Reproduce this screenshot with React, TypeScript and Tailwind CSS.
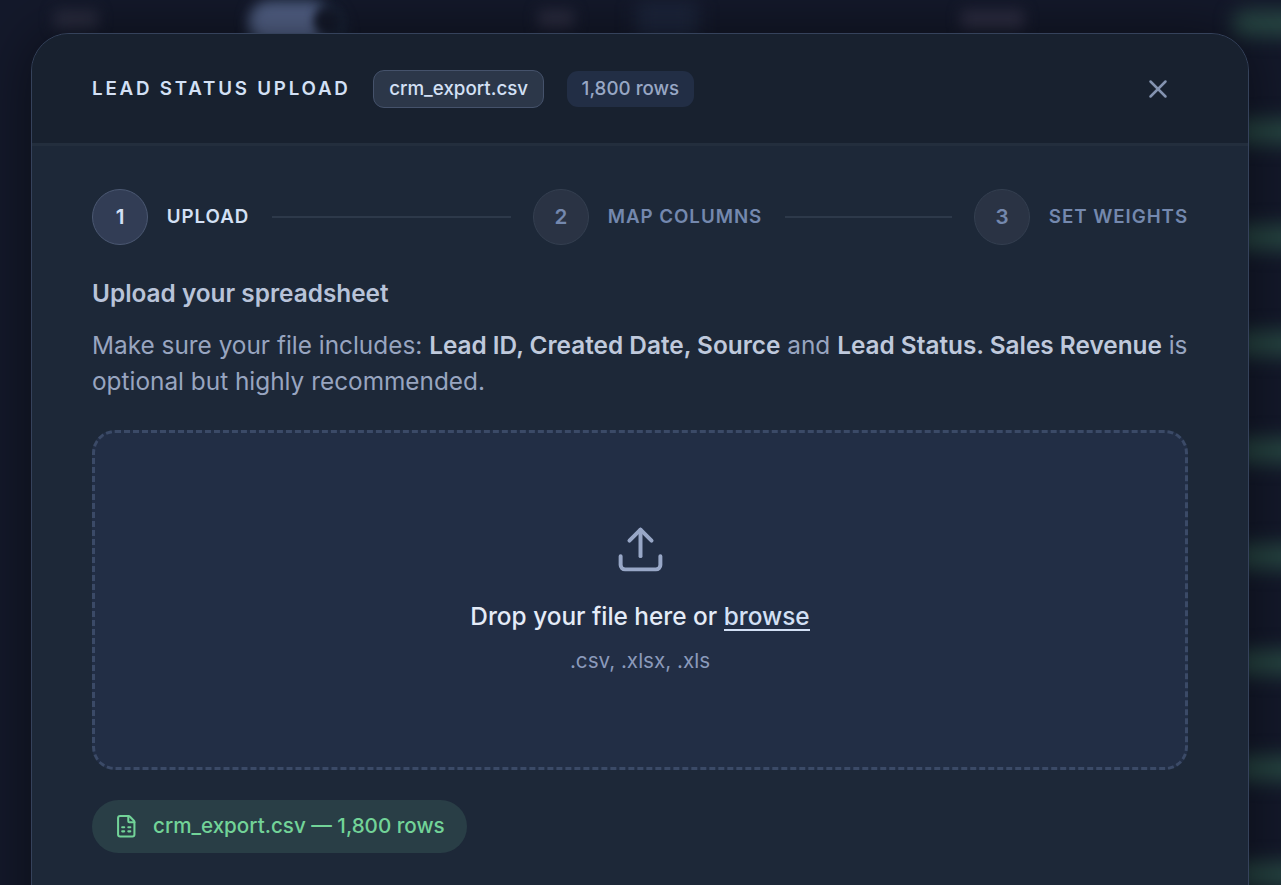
import { FileSpreadsheet, Upload, X } from "lucide-react";

type Step = {
  id: number;
  label: string;
};

const steps: Step[] = [
  { id: 1, label: "Upload" },
  { id: 2, label: "Map columns" },
  { id: 3, label: "Set weights" },
];

const FILE_NAME = "crm_export.csv";
const ROW_COUNT = "1,800 rows";
const CURRENT_STEP = 1;

// top offsets of the green status pills behind the modal
const pillRows = [24, 132, 238, 344, 451, 557, 663, 769, 875];

function Backdrop() {
  return (
    <div className="absolute inset-0 overflow-hidden bg-[#14192b]">
      <div className="absolute left-[54px] top-[10px] h-[19px] w-[44px] rounded bg-[#2a2c3f] blur-[7px]" />
      <div className="absolute left-[249px] top-0 h-[60px] w-[98px] rounded-full bg-[#1a2539] blur-[6px]" />
      <div className="absolute left-[249px] top-[2px] h-[40px] w-[72px] rounded-l-full bg-[#546389] blur-[7px]" />
      <div className="absolute left-[314px] top-[8px] h-[26px] w-[26px] rounded-full bg-[#151a2b] blur-[5px]" />
      <div className="absolute left-[538px] top-[10px] h-[18px] w-[36px] rounded bg-[#2c2d41] blur-[7px]" />
      <div className="absolute left-[636px] top-[2px] h-[40px] w-[62px] rounded bg-[#1d263d] blur-[9px]" />
      <div className="absolute left-[961px] top-[10px] h-[19px] w-[63px] rounded bg-[#2e2e43] blur-[7px]" />
      {pillRows.map((y) => (
        <div
          key={y}
          className="absolute left-[1232px] h-[27px] w-[80px] rounded-full bg-[#264341] blur-[9px]"
          style={{ top: y - 14 }}
        />
      ))}
    </div>
  );
}

function StepIndicator({ current }: { current: number }) {
  return (
    <div className="flex items-center">
      {steps.map((step, index) => {
        const active = step.id === current;
        const last = index === steps.length - 1;
        return (
          <div key={step.id} className={`flex items-center ${last ? "" : "flex-1"}`}>
            <span
              className={`flex size-14 items-center justify-center rounded-full border text-[20.625px] font-semibold ${
                active
                  ? "border-[#4b5872] bg-[#323d55] text-[#d3e0f5]"
                  : "border-[#343f50] bg-[#2a3344] text-[#7488ae]"
              }`}
            >
              {step.id}
            </span>
            <span
              className={`ml-[18.75px] text-[18.75px] font-semibold uppercase tracking-[0.05em] ${
                active ? "text-[#d3e0f5]" : "text-[#7488ae]"
              }`}
            >
              {step.label}
            </span>
            {!last && <div className="mx-[22.5px] h-0.5 flex-1 bg-[#2d394a]" />}
          </div>
        );
      })}
    </div>
  );
}

function Dropzone() {
  return (
    <div className="mt-[30px] flex h-[340px] flex-col items-center rounded-[23px] border-3 border-dashed border-[#3b4a67] bg-[#222e45] pt-[89.5px]">
      <Upload className="size-[53px] text-[#98a7c7]" strokeWidth={1.8} />
      <p className="mt-[21.5px] text-[24.375px] leading-[38px] font-medium text-[#e4ebf7]">
        Drop your file here or{" "}
        <button className="border-b-2 border-[#d3e0f5] leading-[26px] text-[#d3e0f5]">browse</button>
      </p>
      <p className="mt-[11px] text-[20.625px] leading-[30px] text-[#8b9abb]">.csv, .xlsx, .xls</p>
    </div>
  );
}

export default function App() {
  return (
    <div className="relative h-[885px] w-full overflow-hidden font-['Inter',sans-serif]">
      <Backdrop />

      <div className="relative mt-[33px] ml-[31px] h-[960px] w-[1218px] overflow-hidden rounded-[38px] border border-[#35425b] bg-[#1d2838] shadow-[0_0_60px_rgba(0,0,0,0.5)]">
        <header className="flex h-[112px] items-center border-b-3 border-[#232e3d] bg-[#18212f] pr-[75px] pl-[60px]">
          <h2 className="text-[18.75px] leading-[28px] font-semibold uppercase tracking-[0.148em] text-[#d3e0f5]">
            Lead status upload
          </h2>
          <span className="ml-[22.5px] flex h-[38px] items-center rounded-[11px] border border-[#45526b] bg-[#2c3749] px-[15px] text-[18.75px] leading-[28px] font-medium text-[#d3e0f5]">
            {FILE_NAME}
          </span>
          <span className="ml-[23px] flex h-9 items-center rounded-[11px] bg-[#222e45] px-[14.5px] text-[18.75px] leading-[28px] font-medium text-[#98a7c4]">
            {ROW_COUNT}
          </span>
          <button className="ml-auto text-[#8493b0]" aria-label="Close">
            <X className="size-[30px]" strokeWidth={2} />
          </button>
        </header>

        <div className="px-[60px] pt-[43px]">
          <StepIndicator current={CURRENT_STEP} />

          <h3 className="mt-[29px] text-[24.375px] leading-[38px] font-semibold text-[#b8c3d9]">
            Upload your spreadsheet
          </h3>
          <p className="mt-[15px] mb-[31px] text-[24.375px] leading-[36px] text-[#98a5c0]">
            Make sure your file includes:{" "}
            <strong className="font-semibold text-[#bfc9dc]">Lead ID, Created Date, Source</strong> and{" "}
            <strong className="font-semibold text-[#bfc9dc]">Lead Status. Sales Revenue</strong> is
            optional but highly recommended.
          </p>

          <Dropzone />

          <div className="mt-[30px] inline-flex h-[53px] items-center gap-[14.5px] rounded-full bg-[#293e46] pr-[22.5px] pl-[22px] text-[20.625px] font-medium text-[#72d398]">
            <FileSpreadsheet className="size-[24.5px]" strokeWidth={2} />
            {FILE_NAME} — {ROW_COUNT}
          </div>
        </div>
      </div>
    </div>
  );
}
